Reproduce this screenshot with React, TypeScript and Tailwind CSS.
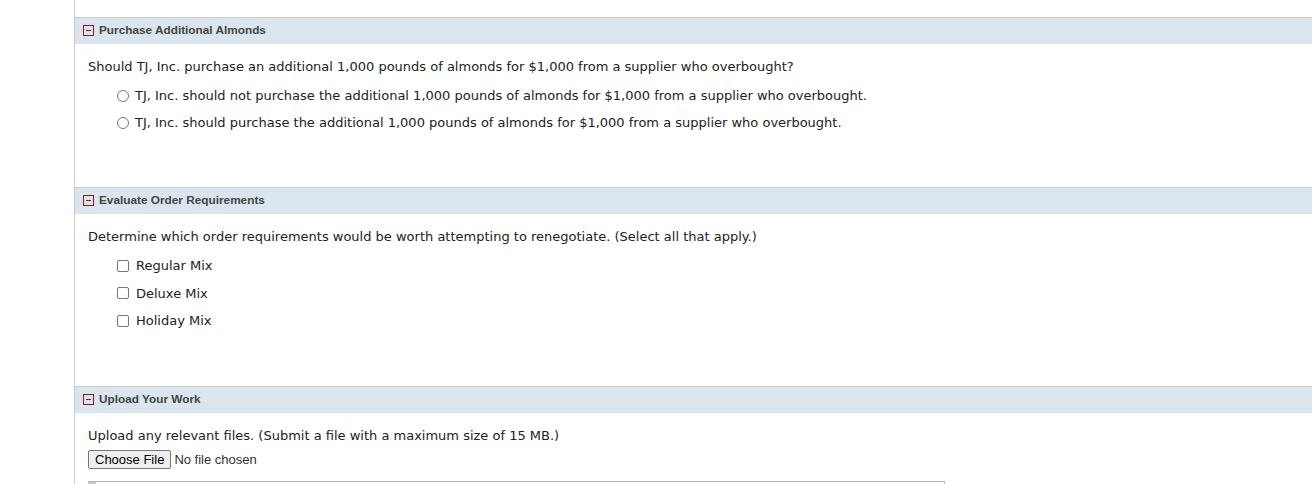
const body = { fontFamily: '"DejaVu Sans", Verdana, sans-serif' }
const arial = { fontFamily: '"Liberation Sans", Arial, sans-serif' }

function SectionHeader({ title }: { title: string }) {
  return (
    <div className="h-[27px] border-t border-[#cccccc] bg-[#dae5ee] flex items-center pl-[8px] pb-[1px]" style={arial}>
      <span className="w-[11px] h-[11px] border border-[#8b1a1a] flex items-center justify-center mr-[5px]">
        <span className="block w-[5px] h-[1px] bg-[#8b1a1a]" />
      </span>
      <span className="text-[11.8px] font-bold text-[#444444]">{title}</span>
    </div>
  )
}

function Radio({ label }: { label: string }) {
  return (
    <div className="flex items-center h-[27px] pl-[42px]">
      <span className="w-[12px] h-[12px] rounded-full border border-[#767676] bg-white mr-[6px]" />
      <span>{label}</span>
    </div>
  )
}

function Check({ label }: { label: string }) {
  return (
    <div className="flex items-center h-[27.5px] pl-[42px]">
      <span className="w-[12px] h-[12px] rounded-[2px] border border-[#767676] bg-white mr-[7px]" />
      <span>{label}</span>
    </div>
  )
}

export default function App() {
  return (
    <div className="w-[1312px] h-[484px] overflow-hidden bg-white pl-[74px]">
      <div className="h-full border-l border-[#cccccc] pt-[17px] text-[13px] text-[#222222]" style={body}>
        <SectionHeader title="Purchase Additional Almonds" />
        <div className="h-[143px] pt-[13px] pl-[13px]">
          <div className="h-[20px] flex items-center">
            Should TJ, Inc. purchase an additional 1,000 pounds of almonds for $1,000 from a supplier who overbought?
          </div>
          <div className="pt-[5px] -ml-[13px]">
            <Radio label="TJ, Inc. should not purchase the additional 1,000 pounds of almonds for $1,000 from a supplier who overbought." />
            <Radio label="TJ, Inc. should purchase the additional 1,000 pounds of almonds for $1,000 from a supplier who overbought." />
          </div>
        </div>

        <SectionHeader title="Evaluate Order Requirements" />
        <div className="h-[172px] pt-[13px] pl-[13px]">
          <div className="h-[20px] flex items-center">
            Determine which order requirements would be worth attempting to renegotiate. (Select all that apply.)
          </div>
          <div className="pt-[5px] -ml-[13px]">
            <Check label="Regular Mix" />
            <Check label="Deluxe Mix" />
            <Check label="Holiday Mix" />
          </div>
        </div>

        <SectionHeader title="Upload Your Work" />
        <div className="pt-[13px] pl-[13px]">
          <div className="h-[20px] flex items-center">
            Upload any relevant files. (Submit a file with a maximum size of 15 MB.)
          </div>
          <div className="flex items-center mt-[4px] text-[13px]" style={arial}>
            <button className="h-[19px] px-[6px] border border-[#767676] rounded-[2px] bg-[#efefef] text-black text-[13px] leading-none">
              Choose File
            </button>
            <span className="ml-[3px] text-[#333333]">No file chosen</span>
          </div>
          <div className="mt-[11px] w-[857px] h-[20px] border-t border-r border-[#bbbbbb]">
            <div className="w-[8px] h-[4px] bg-[#c8c8c8]" />
          </div>
        </div>
      </div>
    </div>
  )
}
